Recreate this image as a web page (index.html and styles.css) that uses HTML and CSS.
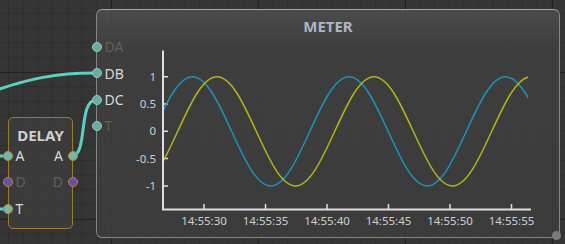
FILE: index.html
```html
<!DOCTYPE html>
<html>
<head>
<meta charset="utf-8">
<link rel="stylesheet" href="styles.css">
</head>
<body>
<div class="canvas">
  <svg class="wires" width="565" height="244" viewBox="0 0 565 244">
    <path d="M-20 96 C 30 77, 60 73, 94 73"/>
    <path d="M72 156 C 88 156, 78 100, 96 100"/>
    <path d="M-5 156 H9"/>
    <path d="M-5 209 H9"/>
  </svg>

  <div class="node delay">
    <div class="delay-title">DELAY</div>
    <div class="delay-rows">
      <div class="drow">
        <span class="dport in teal"></span>
        <span class="lbl on">A</span>
        <span class="lbl on">A</span>
        <span class="dport out teal"></span>
      </div>
      <div class="drow">
        <span class="dport in purple"></span>
        <span class="lbl off">D</span>
        <span class="lbl off">D</span>
        <span class="dport out purple"></span>
      </div>
      <div class="drow">
        <span class="dport in teal"></span>
        <span class="lbl on">T</span>
      </div>
    </div>
  </div>

  <div class="node meter">
    <div class="meter-title">METER</div>
    <div class="mpins">
      <div class="mrow"><span class="mport"></span><span class="lbl off">DA</span></div>
      <div class="mrow"><span class="mport"></span><span class="lbl on">DB</span></div>
      <div class="mrow"><span class="mport"></span><span class="lbl on">DC</span></div>
      <div class="mrow"><span class="mport"></span><span class="lbl off">T</span></div>
    </div>
    <svg class="chart" width="462" height="195" viewBox="97 42 462 195">
      <defs>
        <clipPath id="plot"><rect x="164" y="45" width="364" height="170"/></clipPath>
      </defs>
      <path class="axis" d="M163 50.5 V209.5 H531"/>
      <path class="tick" d="M163 76.7 h5 M163 104 h5 M163 131.3 h5 M163 158.6 h5 M163 186 h5"/>
      <path class="tick" d="M204 209 v-5 M265.5 209 v-5 M327 209 v-5 M388.5 209 v-5 M450 209 v-5 M511.5 209 v-5"/>
      <g class="ylab">
        <text x="156" y="80.8">1</text>
        <text x="156" y="108.1">0.5</text>
        <text x="156" y="135.4">0</text>
        <text x="156" y="162.7">-0.5</text>
        <text x="156" y="190.1">-1</text>
      </g>
      <g class="xlab">
        <text x="204" y="225">14:55:30</text>
        <text x="265.5" y="225">14:55:35</text>
        <text x="327" y="225">14:55:40</text>
        <text x="388.5" y="225">14:55:45</text>
        <text x="450" y="225">14:55:50</text>
        <text x="511.5" y="225">14:55:55</text>
      </g>
      <g clip-path="url(#plot)">
        <path class="wave blue" d="M153.375 131.3
          c 13.08 -28.67 25.11 -54.6 39.125 -54.6
          c 14.015 0 26.045 25.93 39.125 54.6
          c 13.08 28.67 25.11 54.6 39.125 54.6
          c 14.015 0 26.045 -25.93 39.125 -54.6
          c 13.08 -28.67 25.11 -54.6 39.125 -54.6
          c 14.015 0 26.045 25.93 39.125 54.6
          c 13.08 28.67 25.11 54.6 39.125 54.6
          c 14.015 0 26.045 -25.93 39.125 -54.6
          c 13.08 -28.67 25.11 -54.6 39.125 -54.6
          c 14.015 0 26.045 25.93 39.125 54.6"/>
        <path class="wave yellow" d="M138.5 185.9
          c 14.06 0 26.13 -25.93 39.25 -54.6
          c 13.12 -28.67 25.19 -54.6 39.25 -54.6
          c 14.06 0 26.13 25.93 39.25 54.6
          c 13.12 28.67 25.19 54.6 39.25 54.6
          c 14.06 0 26.13 -25.93 39.25 -54.6
          c 13.12 -28.67 25.19 -54.6 39.25 -54.6
          c 14.06 0 26.13 25.93 39.25 54.6
          c 13.12 28.67 25.19 54.6 39.25 54.6
          c 14.06 0 26.13 -25.93 39.25 -54.6
          c 13.12 -28.67 25.19 -54.6 39.25 -54.6"/>
      </g>
    </svg>
    <span class="grip"></span>
  </div>
</div>
</body>
</html>
```

FILE: styles.css
```css
html, body {
  margin: 0;
  padding: 0;
}
body {
  background: #353535;
  font-family: "Noto Sans", "DejaVu Sans", sans-serif;
}
.canvas {
  position: relative;
  width: 565px;
  height: 244px;
  overflow: hidden;
  background-color: #353535;
  background-image:
    linear-gradient(to right, #232323 1px, transparent 1px),
    linear-gradient(to bottom, #232323 1px, transparent 1px),
    linear-gradient(to right, #2e2e2e 1px, transparent 1px),
    linear-gradient(to bottom, #2e2e2e 1px, transparent 1px);
  background-size: 147px 147px, 147px 147px, 14.7px 14.7px, 14.7px 14.7px;
  background-position: 111px 0, 0 72px, 8px 0, 0 13px;
}
.wires {
  position: absolute;
  left: 0;
  top: 0;
}
.wires path {
  fill: none;
  stroke: #5ecfc3;
  stroke-width: 3;
  stroke-linecap: round;
}
.node {
  position: absolute;
  box-sizing: border-box;
}
.lbl {
  font-size: 14px;
}
.lbl.on { color: #d8d8d8; }
.lbl.off { color: #5f5f5f; }

/* DELAY node */
.delay {
  left: 8px;
  top: 116.5px;
  width: 65px;
  height: 112px;
  border: 1.5px solid #9b7a32;
  border-radius: 5px;
  background: rgba(60, 60, 60, 0.9);
  padding-top: 7px;
}
.delay-title {
  text-align: center;
  font-weight: bold;
  font-size: 15px;
  line-height: 20px;
  color: #d0d0d0;
}
.delay-rows {
  margin-top: -2px;
}
.drow {
  position: relative;
  height: 26.5px;
  line-height: 26.5px;
  display: flex;
  justify-content: space-between;
  align-items: center;
  padding: 0 9px 0 6.5px;
}
.dport {
  position: absolute;
  top: 50%;
  width: 10px;
  height: 10px;
  margin-top: -5px;
  box-sizing: border-box;
  border-radius: 50%;
  border: 1.5px solid #b38b2e;
}
.dport.in { left: -5.75px; }
.dport.out { right: -5.75px; }
.dport.teal { background: #74b8ad; }
.dport.purple { background: #6a4eae; }

/* METER node */
.meter {
  left: 96px;
  top: 9px;
  width: 464px;
  height: 229px;
  border: 1px solid #868686;
  border-top-color: #a6a6a6;
  border-radius: 6px;
  background:
    linear-gradient(to bottom, rgba(80, 80, 80, 0.82) 0px, rgba(64, 64, 64, 0.82) 40px, rgba(61, 61, 61, 0.82) 100%);
}
.meter-title {
  height: 32px;
  line-height: 32px;
  text-align: center;
  font-weight: bold;
  font-size: 15px;
  color: #adb7c5;
}
.mpins {
  position: absolute;
  left: -5.5px;
  top: 23.85px;
}
.mrow {
  height: 26.3px;
  display: flex;
  align-items: center;
  gap: 3px;
}
.mport {
  width: 10px;
  height: 10px;
  box-sizing: border-box;
  border-radius: 50%;
  background: #68aca4;
  border: 1px solid #95c9c3;
}
.chart {
  display: block;
}
.chart .axis {
  fill: none;
  stroke: #dedede;
  stroke-width: 2;
}
.chart .tick {
  fill: none;
  stroke: #dedede;
  stroke-width: 1.5;
}
.chart text {
  font-family: "Noto Sans", "DejaVu Sans", sans-serif;
  font-size: 11.5px;
  fill: #cfcfcf;
}
.ylab text { text-anchor: end; }
.xlab text { text-anchor: middle; }
.wave {
  fill: none;
  stroke-width: 1.5;
}
.wave.blue { stroke: #1c93bb; }
.wave.yellow { stroke: #b4b41a; }
.grip {
  position: absolute;
  right: -1.5px;
  bottom: -3px;
  width: 9px;
  height: 9px;
  border-radius: 50%;
  background: #7a7a7a;
}
```
